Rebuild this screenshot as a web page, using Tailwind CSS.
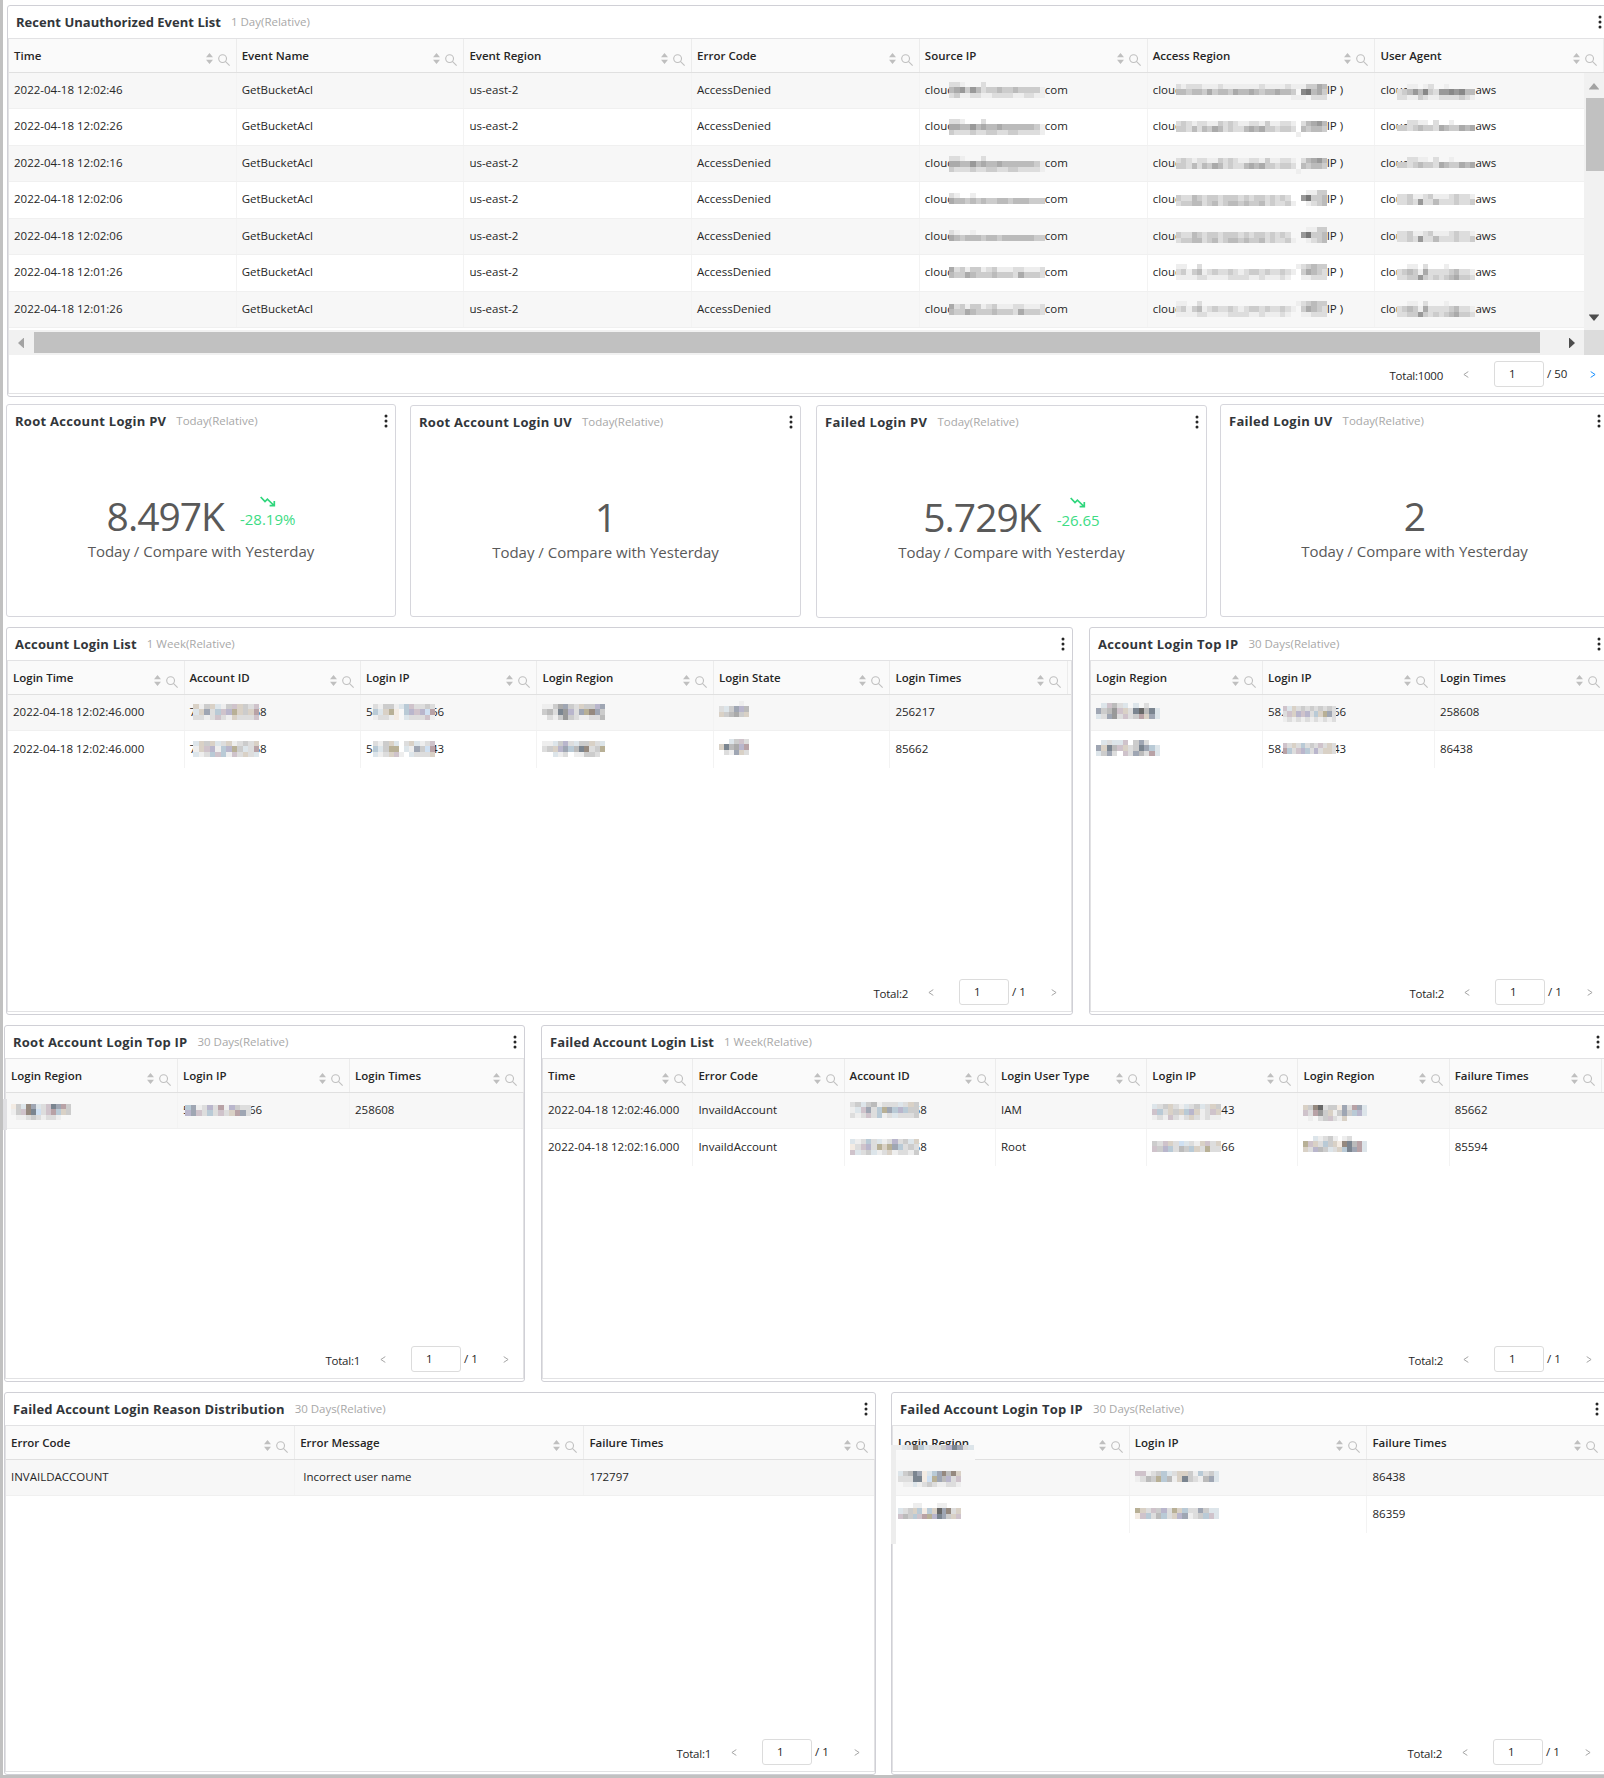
<!DOCTYPE html>
<html lang="en">
<head>
<meta charset="utf-8">
<title>Account Login Dashboard</title>
<script src="https://cdn.jsdelivr.net/npm/@tailwindcss/browser@4"></script>
</head>
<body class="bg-white">
<main id="board" class="flex h-[1778px] w-[1604px] flex-col overflow-hidden border-b-[3px] border-l-[3px] border-[#c1c1c1] bg-white font-['Open_Sans','Noto_Sans',sans-serif] text-[11.5px] text-[#262626]"></main>
<script>
// Palette of the masked cells: hex digits are greys, letters g-s are tints.
const TINT = { g:'#b9cad6', h:'#cfc3cb', i:'#d9d1c6', j:'#9fa6b3', k:'#cfe0f2', l:'#b8a2a6', m:'#b9b6cc', n:'#7b8590', o:'#b8b096', p:'#f3ebe3', q:'#95897f', r:'#dde5ea', s:'#686868' };
const colour = ch => TINT[ch] || '#' + ch.repeat(3);

function mosaic(rows, width, dy) {
  const n = Math.max(...rows.map(r => r.length)), cw = width / n, ch = 5.33;
  let r = '';
  rows.forEach((row, y) => [...row].forEach((c, x) => {
    if (c !== '.') r += `<rect x="${(x * cw).toFixed(2)}" y="${(y * ch).toFixed(2)}" width="${(cw + .1).toFixed(2)}" height="${ch + .1}" fill="${colour(c)}"/>`;
  }));
  return `<svg class="relative z-10 shrink-0 self-start" style="margin-top:${dy}px" width="${width}" height="${rows.length * 5.33 + .2}" shape-rendering="crispEdges">${r}</svg>`;
}
// Masked value: leading text `pw` wide, mask, trailing text.
const masked = (pre, pw, rows, width, dy, post = '', shift = 0) =>
  `<span class="shrink-0" style="width:${pw}px">${pre}</span>${mosaic(rows, width, dy)}<span style="margin-left:${shift}px">${post}</span>`;

const sortIcon = `<svg class="shrink-0" width="7" height="11" viewBox="0 0 7 11" fill="#bfbfbf"><path d="M3.5 0 7 4.3H0zM3.5 11 0 6.7h7z"/></svg>`;
const searchIcon = `<svg class="mt-[3px] ml-[5px] shrink-0" width="12" height="12" viewBox="0 0 12 12" fill="none" stroke="#bfbfbf" stroke-width="1.1"><circle cx="4.6" cy="4.6" r="3.9"/><path d="m7.4 7.4 4.2 4.2"/></svg>`;
const kebab = `<svg class="shrink-0" width="4" height="14" viewBox="0 0 4 14" fill="#262626"><circle cx="2" cy="2" r="1.5"/><circle cx="2" cy="7" r="1.5"/><circle cx="2" cy="12" r="1.5"/></svg>`;
const trend = `<svg width="16" height="11" viewBox="0 0 16 11" fill="none" stroke="#2fd67c" stroke-width="1.7"><path d="M.7 1 5 5.6l2.4-2.4 6.6 6.3M9.6 9.7h4.7V4.9"/></svg>`;

const head = c => `<header class="flex h-8 shrink-0 items-center pr-[7.5px] pl-[8px]"><h2 class="text-[13px] leading-none font-bold whitespace-nowrap text-[#32363a]" style="letter-spacing:${c.ls}px">${c.title}</h2><span class="ml-[10px] text-[11.5px] leading-none whitespace-nowrap text-[#a8a8a8]">${c.range}</span><span class="ml-auto">${kebab}</span></header>`;

function pager(c) {
  const t = c.tail || [62, 42];
  return `<div class="mt-auto mb-[6px] flex h-[26px] items-center justify-end leading-none">
    <span class="pt-[4px] tracking-[-0.25px]">Total:${c.total}</span>
    <span class="flex w-[51px] pl-[20px]"><svg width="6" height="7" viewBox="0 0 6 7" fill="none" stroke="#a6a6a6"><path d="M5.3.6.9 3.5l4.4 2.9"/></svg></span>
    <span class="flex h-[26px] w-[50px] items-center rounded-[3px] border border-[#dcdcdc] pl-[14px]">1</span>
    <span class="flex items-center" style="width:${t[0]}px"><span class="shrink-0 pl-[3px] whitespace-nowrap" style="width:${t[1]}px">/ ${c.pages}</span><svg width="6" height="7" viewBox="0 0 6 7" fill="none" stroke="${c.pages > 1 ? '#1890ff' : '#a6a6a6'}"><path d="M.7.6l4.4 2.9L.7 6.4"/></svg></span>
  </div>`;
}

function table(c) {
  const w = c.cols.map((_, i) => c.edges[i + 1] - c.edges[i]);
  const hd = c.cols.map((n, i) => `<div class="relative flex shrink-0 items-center border-r border-[#ececec] pt-px pl-[5px]" style="width:${w[i]}px"><span class="text-[11.5px] font-semibold whitespace-nowrap">${n}</span><span class="mt-[5px] mr-[6px] ml-auto flex items-center">${sortIcon}${searchIcon}</span>${c.cover && i === 0 ? c.cover : ''}</div>`).join('');
  const body = c.rows.map((r, k) => `<div class="flex shrink-0 ${k % 2 ? 'h-[37px] bg-white' : 'h-[36px] bg-[#f7f7f7]'} ${k % 2 && !c.scroll ? '' : 'border-b border-[#f0f0f0]'}">${r.map((v, i) => `<div class="flex shrink-0 items-center border-r border-[#f3f3f3] pl-[5px] whitespace-nowrap last:border-r-0 ${k % 2 ? 'pb-[2px]' : 'pb-px'}" style="width:${w[i]}px">${v}</div>`).join('')}</div>`).join('');
  return `<div class="flex h-[33px] shrink-0 bg-[#fafafa]">${hd}</div><div class="flex min-h-0 flex-col overflow-hidden border-t border-[#e0e0e0] ${c.scroll ? 'h-[258px] shrink-0' : ''}">${body}</div>`;
}

const tri = (d, f) => `<svg class="block" width="10" height="10" viewBox="0 0 10 10" fill="${f}"><path d="${d}"/></svg>`;
const bars = `
  <div class="absolute top-[34px] right-[4px] flex h-[257px] w-[20px] flex-col items-center bg-[#f1f1f1] pt-[8px]">
    ${tri('M5 2 10.5 8.5H-.5z', '#a3a3a3')}<div class="mt-[7px] h-[73px] w-[18px] self-end bg-[#c1c1c1]"></div><div class="mt-auto mb-[7px]">${tri('M5 8 -.5 1.5h11z', '#4d4d4d')}</div>
  </div>
  <div class="flex h-[25px] shrink-0 bg-[#f1f1f1]">
    <div class="flex w-[25px] shrink-0 items-center pl-[8px]">${tri('M1 5 7 -.5v11z', '#a3a3a3')}</div>
    <div class="mt-[2px] h-[21px] w-[1506px] shrink-0 bg-[#c1c1c1]"></div>
    <div class="flex w-[44px] shrink-0 items-center justify-end pr-[8px]">${tri('M3 -.5 9 5 3 10.5z', '#4d4d4d')}</div>
    <div class="grow bg-[#dcdcdc]"></div>
  </div>`;

const card = c => `<section class="relative flex shrink-0 flex-col rounded-[3px] border border-[#d0d0d6] pb-[2px]" style="width:${c.w}px;height:${c.h}px;margin-left:${c.ml}px">${head(c)}<div class="relative flex min-h-0 grow flex-col border border-[#e2e2e4]">${table(c)}${c.scroll ? bars : ''}${pager(c)}</div>${c.extra || ''}</section>`;

const stat = c => `<section class="flex shrink-0 flex-col rounded-[3px] border border-[#d6d6dc] text-[#595959]" style="width:${c.w}px;height:${c.h}px;margin-left:${c.ml}px;margin-top:${c.mt}px">${head(c)}
  <div class="flex grow flex-col items-center pt-[50px]">
    <div class="flex h-[56px] items-center"><span class="text-[39px] leading-none tracking-[-1px]">${c.value}</span>${c.delta ? `<span class="mb-[7px] ml-[16px] flex flex-col items-center text-[#3ddc84]">${trend}<span class="mt-[5px] text-[15px] leading-none">${c.delta}</span></span>` : ''}</div>
    <p class="mt-[-2px] text-[15px] leading-5">Today / Compare with Yesterday</p>
  </div></section>`;

const srcA = [['dde...d...........','ba9c9bdccbccbcccce','dceeddeeddddeeddee'],['dde...d...........','aabb9babbabbbbbbce','cdddcddccddccdddde']];
const src = [srcA[0], srcA[1], srcA[1], ['de..e.............','abbcbcbccbbcbbbccc'], ['de..e.............','abcbbbcbbcbbbbbbcc'], ['adceccedceeeddeeed','bccabcccbcccdacccd'], ['adceccedceeeddeeed','bccabcccbcccdacccd']];
const accA = ['dcdeddeecdcdeeddeceedde.dba9b','ccdbdbcabdcddbabaccdccd.bcbbc','.......................e.....'];
const accB = ['.........................eecc','cddbcdccdcccdcdccdcdcd..97ccb','dccbbdcbdcbbcbccbdcddce..edcb'];
const accC = ['ee..d..................edcbcc','dcecbedcddcdedccdcddcde.cabcd','eeeeddeeeeddddeedeeede..eeddd'];
const acc = [['dedddeeedeeeeeeedeeeedeeeccab','bbcbbcacbbcabbabcbbabbc.87bac','......................eee.ddd'], accA, accA, accB, accB, accC, accC];
const accDy = [11,12,12,8,8,9,9];
const agt2 = ['..ddee.d..e....','ccdcbccdabccaba'], agt4 = ['ddceedceeedcdde','ddcd9ddbdddcddc'], agt6 = ['..ee.d...e.....','dcbceaddddcbdde','ddcc9cdcdcbaccd'];
const agt = [['..ee.ed..e.....','dcb9b8cd99898bb','ddeecdeeddddcde'], agt2, agt2, agt4, agt4, agt6, agt6];
const agtDy = [11,11,11,12,12,9,9];
const times = ['12:02:46','12:02:26','12:02:16','12:02:06','12:02:06','12:01:26','12:01:26'];
const srcDy = [9,10,10,11,11,12,12];

const idA = ['iecirechicdh','rijdghmoicil','ddedhdeidddh'], idB = ['ricirdiedcdi','eihmegmocrdl','redghgehdidr'];
const ipA = ['deccerghddcd','griop.gmhmkl','eddep.rdddhe'], ipB = ['decir.diredh','grcoo.rejckl','redihe.rdddi'];
const rgA = ['eecajcdiccmj','cbdn9mdjoqjc','.dec9cdeeddb'], rgB = ['eercmdrccidr','dcimjgbnqdco','..red.eeccd.'];
const rgC = ['.rhbdr.r.d..','jcb9hidnsbnr','rdj9dhdclijr'], rgD = ['.rdrrh.cjd..','jinbhidcnjgr','rcjd.hdjbdlr'];

const rows = [
  { mt: 5, items: [{ title:'Recent Unauthorized Event List', ls:.03, range:'1 Day(Relative)', ml:4, w:1603, h:392, scroll:true, total:1000, pages:50, tail:[64,46],
    cols:['Time','Event Name','Event Region','Error Code','Source IP','Access Region','User Agent'], edges:[9,236.7,464.4,692.1,919.9,1147.7,1375.5,1604],
    rows: times.map((t,i) => ['2022-04-18 '+t,'GetBucketAcl','us-east-2','AccessDenied',
      masked('cloud',24,src[i],96,srcDy[i],'com'), masked('cloud',23,acc[i],151,accDy[i],'IP )'), masked('cloud',17,agt[i],78,agtDy[i],'aws')]) }] },
  { mt: 7, items: [
    { title:'Root Account Login PV', ls:.28, range:'Today(Relative)', ml:3, w:390, h:213, mt:0, value:'8.497K', delta:'-28.19%' },
    { title:'Root Account Login UV', ls:.28, range:'Today(Relative)', ml:14, w:391, h:212, mt:1, value:'1' },
    { title:'Failed Login PV', ls:.33, range:'Today(Relative)', ml:15, w:391, h:213, mt:1, value:'5.729K', delta:'-26.65' },
    { title:'Failed Login UV', ls:.3, range:'Today(Relative)', ml:13, w:389, h:213, mt:0, value:'2' }], stat:true },
  { mt: 9, items: [
    { title:'Account Login List', ls:.18, range:'1 Week(Relative)', ml:3, w:1067, h:388, total:2, pages:1, cols:['Login Time','Account ID','Login IP','Login Region','Login State','Login Times'], edges:[8,184.5,360.9,537.4,713.9,890.4,1068],
      rows:[['2022-04-18 12:02:46.000',masked('7',3,idA,66,9,'68',-5),masked('58',7,ipA,62,9,'66',-4),masked('',0,rgA,63,9),masked('',0,['....e.','drcjmb','icbaci'],30,6),'256217'],
            ['2022-04-18 12:02:46.000',masked('7',3,idB,66,10,'68',-5),masked('58',7,ipB,62,10,'43',-4),masked('',0,rgB,63,10),masked('',0,['..rchd','inbaml','.dejid'],30,8),'85662']] },
    { title:'Account Login Top IP', ls:.28, range:'30 Days(Relative)', ml:16, w:520, h:388, total:2, pages:1, cols:['Login Region','Login IP','Login Times'], edges:[1091,1262.9,1434.9,1607],
      rows:[[masked('',0,rgC,64,8),masked('58.',15,['hridcdcdcdcd','dhimhmdgiojd','edededededed'],53,11,'66',-3),'258608'],[masked('',0,rgD,64,9),masked('58.',15,['hdidgdcdhdid','lgdhmgdmdiid'],53,12,'43',-3),'86438']] }] },
  { mt: 10, items: [
    { title:'Root Account Login Top IP', ls:.24, range:'30 Days(Relative)', ml:1, w:521, h:357, total:1, pages:1, cols:['Login Region','Login IP','Login Times'], edges:[5.5,177.4,349.5,524],
      extra:'<div class="absolute top-[73px] -left-[3px] h-[31px] w-[5px] bg-[#e0e0e3]"></div>',
      rows:[[masked('',0,['pcrqjrdhnjlc','echqnkdhlgic','.eedcdedde..'],60,11),masked('5',2,['gjedmdlemcdd','mjhdgdhdiljd'],66,12,'66',-2),'258608']] },
    { title:'Failed Account Login List', ls:.13, range:'1 Week(Relative)', ml:16, w:1067, h:357, total:2, pages:1, cols:['Time','Error Code','Account ID','Login User Type','Login IP','Login Region','Failure Times'], edges:[542.5,692.9,844.1,995.5,1146.9,1298,1449.2,1602],
      rows:[['2022-04-18 12:02:46.000','InvaildAccount',masked('',0,['dcrcbedddrdic','erhjdgojgmgcc','dedhdgedrdddc'],69,9,'68',-5),'IAM',masked('',0,['rdciderdcrdic','hgdicigmiedhi','edehdedidedee'],69,11,'43'),masked('',0,['icqsdccpjdljr','hdl9ciecjcgmr','.e.dchdei....'],64,12),'85662'],
            ['2022-04-18 12:02:16.000','InvaildAccount',masked('',0,['redgdredmdcri','pdhmdoiojgdcd','hrdcredieddec'],69,10,'68',-5),'Root',masked('',0,['cdhidkrdeihdi','hcmgdbcgidodd'],69,12,'66'),masked('',0,['..redce.ed...','ohidgcipqnblr','idmbcrdignjlr'],64,7),'85594']] }] },
  { mt: 10, items: [
    { title:'Failed Account Login Reason Distribution', ls:.13, range:'30 Days(Relative)', ml:1, w:872, h:383, total:1, pages:1, cols:['Error Code','Error Message','Failure Times'], edges:[5.5,294.7,583.9,874.5],
      rows:[['INVAILDACCOUNT','<span class="pl-[3px]">Incorrect user name</span>','172797']] },
    { title:'Failed Account Login Top IP', ls:.22, range:'30 Days(Relative)', ml:15, w:716, h:383, total:2, pages:1, cols:['Login Region','Login IP','Failure Times'], edges:[893,1129.8,1367.5,1605.5],
      cover:`<div class="absolute top-[19px] left-0 z-10 flex h-[15px] w-[82px] flex-col bg-[#f9f9f9]"><div class="flex h-[6px] bg-[#fafafa] pl-[3px]">${mosaic(['erdqgrddcmnjdr'],78,0)}</div></div>`,
      extra:'<div class="absolute top-[52px] -left-px z-10 h-[99px] w-[5px] bg-[#ededed]"></div>',
      rows:[[masked('',0,['rcbnjprgjqbqi','dddnnpkojbmdh','.eeredcdeedde'],63,11),masked('',0,['hhedcgrdiicegdcr','edbcogbeincdebjr'],84,11),'86438'],
            [masked('',0,['...ee...ee...','rdcigpgisjqdi','hbcghlomnjcih'],63,7),masked('',0,['oidhcmdoigddjcrr','phgdbgdimjedcghr'],84,12),'86359']] }] }
];
document.getElementById('board').innerHTML = rows.map(r =>
  `<div class="flex shrink-0" style="margin-top:${r.mt}px">${r.items.map(r.stat ? stat : card).join('')}</div>`).join('');
</script>
</body>
</html>
